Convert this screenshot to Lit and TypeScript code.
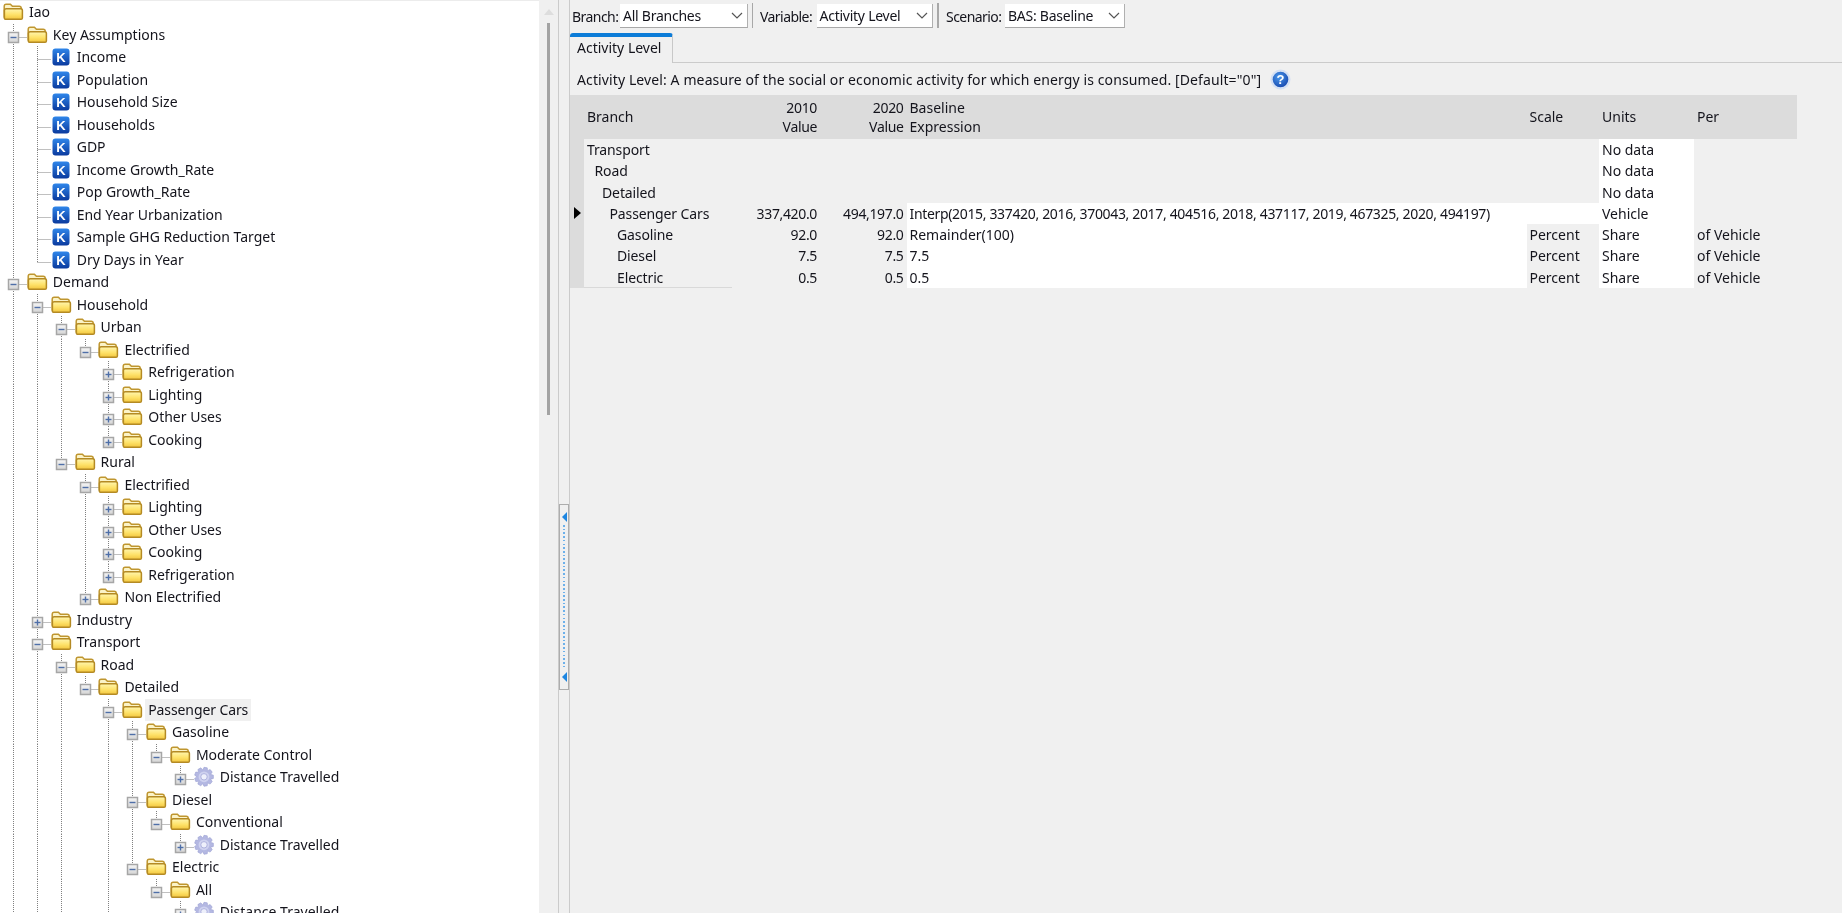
import { LitElement, html, css, svg } from "lit";
import { customElement } from "lit/decorators.js";

type Icon = "folder" | "key" | "gear";
interface Node { level: number; label: string; icon: Icon; plus?: boolean; active?: boolean; }

const f = (level: number, label: string, plus = false, active = false): Node => ({ level, label, icon: "folder", plus, active });
const k = (label: string): Node => ({ level: 2, label, icon: "key" });
const g = (level: number, label: string): Node => ({ level, label, icon: "gear", plus: true });

const TREE: Node[] = [
  f(0, "Iao"), f(1, "Key Assumptions"),
  k("Income"), k("Population"), k("Household Size"), k("Households"), k("GDP"),
  k("Income Growth_Rate"), k("Pop Growth_Rate"), k("End Year Urbanization"),
  k("Sample GHG Reduction Target"), k("Dry Days in Year"),
  f(1, "Demand"), f(2, "Household"), f(3, "Urban"), f(4, "Electrified"),
  f(5, "Refrigeration", true), f(5, "Lighting", true), f(5, "Other Uses", true), f(5, "Cooking", true),
  f(3, "Rural"), f(4, "Electrified"),
  f(5, "Lighting", true), f(5, "Other Uses", true), f(5, "Cooking", true), f(5, "Refrigeration", true),
  f(4, "Non Electrified", true), f(2, "Industry", true), f(2, "Transport"), f(3, "Road"), f(4, "Detailed"),
  f(5, "Passenger Cars", false, true),
  f(6, "Gasoline"), f(7, "Moderate Control"), g(8, "Distance Travelled"),
  f(6, "Diesel"), f(7, "Conventional"), g(8, "Distance Travelled"),
  f(6, "Electric"), f(7, "All"), g(8, "Distance Travelled"),
];
// Levels whose sibling list carries on below the visible part of the tree.
const CONTINUES = new Set([1, 2, 3, 5]);

function continues(i: number, lvl: number): boolean {
  for (let j = i + 1; j < TREE.length; j++) {
    if (TREE[j].level < lvl) return false;
    if (TREE[j].level === lvl) return true;
  }
  return CONTINUES.has(lvl);
}

const CX = 13.5, HY = 13.5, CW = 23.85, RH = 22.5;

function guideCell(i: number, k: number) {
  const n = TREE[i];
  const dash = "1 1";
  const cls = "cell";
  if (k < n.level) {
    return continues(i, k)
      ? svg`<svg class=${cls} width=${CW} height=${RH}><line x1=${CX} x2=${CX} y1="0" y2=${RH} stroke="#808080" stroke-dasharray=${dash}/></svg>`
      : svg`<svg class=${cls} width=${CW} height=${RH}></svg>`;
  }
  const more = continues(i, k);
  const expanded = i + 1 < TREE.length && TREE[i + 1].level > n.level;
  const hasBox = n.plus || expanded;
  return svg`<svg class=${cls} width=${CW} height=${RH}>
    <line x1=${CX} x2=${CX} y1="0" y2=${more ? RH : HY} stroke="#808080" stroke-dasharray=${dash}/>
    <line x1=${CX} x2="27" y1=${HY} y2=${HY} stroke="#808080" stroke-dasharray=${dash}/>
    ${hasBox
      ? svg`<rect x="8.5" y="8.5" width="10" height="10" fill="url(#box)" stroke="#a6a6a6" stroke-width="1.5"/>
            <line x1="10.5" x2="16.5" y1=${HY} y2=${HY} stroke="#4f6fa8" stroke-width="1.4"/>
            ${n.plus ? svg`<line x1=${CX} x2=${CX} y1="10.5" y2="16.5" stroke="#4f6fa8" stroke-width="1.4"/>` : ""}`
      : ""}
  </svg>`;
}

const folder = svg`<svg class="ico" width="20" height="17" viewBox="0 0 20 17">
  <path d="M1.2 14V3.4Q1.2 1.2 3.2 1.2H7.4L9.4 3.3H16.2Q18.2 3.3 18.2 5.3V15.4H2.6Q1.2 15.4 1.2 14Z" fill="#fbf3c8" stroke="#bf962f" stroke-width="1.5"/>
  <path d="M1.4 15V7.4Q1.4 5.7 3.2 5.7H17.6Q19.4 5.7 19.4 7.4V15Q19.4 16.3 18 16.3H2.8Q1.4 16.3 1.4 15Z" fill="url(#fold)" stroke="#b48a24" stroke-width="1.5"/>
</svg>`;

const keyIcon = svg`<svg class="ico" width="20" height="17" viewBox="0 0 20 17">
  <rect x="1.5" y="0.5" width="17" height="17" rx="3" fill="url(#key)"/>
  <text x="10" y="13.5" text-anchor="middle" class="k">K</text>
</svg>`;

const gearPath = (() => {
  const pts: string[] = [];
  const teeth = 9, cx = 10, cy = 8.8;
  for (let t = 0; t < teeth; t++) {
    const a = (t / teeth) * Math.PI * 2;
    const w = Math.PI / teeth;
    const p = (r: number, an: number) => `${(cx + r * Math.cos(an)).toFixed(2)} ${(cy + r * Math.sin(an)).toFixed(2)}`;
    pts.push(p(7.2, a - w * 0.95), p(9.5, a - w * 0.5), p(9.5, a + w * 0.5), p(7.2, a + w * 0.95));
  }
  return "M" + pts.join("L") + "Z";
})();

const gear = svg`<svg class="ico" width="20" height="18" viewBox="0 0 20 18">
  <path d=${gearPath} fill="#b4b8e2" stroke="#9a9fd2" stroke-width=".6"/>
  <circle cx="10" cy="8.8" r="5.4" fill="#cfd2ef"/>
  <circle cx="10" cy="8.8" r="3.2" fill="#eef0fb" stroke="#a2a6d8" stroke-width=".8"/>
</svg>`;

const ICONS = { folder, key: keyIcon, gear };

const chevron = html`<svg class="chev" width="12" height="7" viewBox="0 0 12 7"><path d="M1 1L6 6L11 1" fill="none" stroke="#555" stroke-width="1.2"/></svg>`;

interface Row { indent: number; name: string; v10?: string; v20?: string; expr?: string; scale?: string; units: string; per?: string; marker?: boolean; }
const ROWS: Row[] = [
  { indent: 0, name: "Transport", units: "No data" },
  { indent: 1, name: "Road", units: "No data" },
  { indent: 2, name: "Detailed", units: "No data" },
  { indent: 3, name: "Passenger Cars", v10: "337,420.0", v20: "494,197.0", expr: "Interp(2015, 337420, 2016, 370043, 2017, 404516, 2018, 437117, 2019, 467325, 2020, 494197)", units: "Vehicle", marker: true },
  { indent: 4, name: "Gasoline", v10: "92.0", v20: "92.0", expr: "Remainder(100)", scale: "Percent", units: "Share", per: "of Vehicle" },
  { indent: 4, name: "Diesel", v10: "7.5", v20: "7.5", expr: "7.5", scale: "Percent", units: "Share", per: "of Vehicle" },
  { indent: 4, name: "Electric", v10: "0.5", v20: "0.5", expr: "0.5", scale: "Percent", units: "Share", per: "of Vehicle" },
];

@customElement("app-root")
export class AppRoot extends LitElement {
  static styles = css`
    :host { display: block; width: 1842px; height: 913px; overflow: hidden; background: #f0f0f0;
      font: 14px "Noto Sans", "Open Sans", sans-serif; color: #14141c; filter: blur(0.3px); }
    .defs { display: block; }
    .app { display: flex; height: 913px; }
    .tree { width: 539px; height: 913px; overflow: hidden; background: #fff; border-top: 1px solid #ececec; box-sizing: border-box; padding-top: 0.3px; flex: none; }
    .node { display: flex; align-items: flex-start; height: 22.5px; white-space: nowrap; }
    .cell { display: block; flex: none; overflow: visible; }
    .ico { display: block; flex: none; margin: 2px 0 0 3px; overflow: visible; }
    .k { font: bold 13px "Liberation Sans", sans-serif; fill: #fff; }
    .label { margin-left: 3px; padding: 0 3px; line-height: 22px; height: 22px; }
    .label.active { background: #f0f0f0; letter-spacing: -0.1px; }
    .sb { width: 19px; flex: none; display: flex; flex-direction: column; align-items: center; box-sizing: border-box; padding-top: 9px; }
    .sb-up { width: 0; height: 0; border: 5px solid transparent; border-top: 0; border-bottom: 6px solid #dddddd; }
    .sb-thumb { width: 2.5px; height: 392px; margin-top: 8px; background: #a3a3a3; }
    .split { width: 12px; flex: none; box-sizing: border-box; border-left: 1.5px solid #cbcbcb; border-right: 1.5px solid #cbcbcb; padding-top: 504px; }
    .grip { height: 186px; box-sizing: border-box; border: 1.5px solid #adadad; display: flex; flex-direction: column; align-items: center; justify-content: space-between; padding: 7px 0; background: #f0f0f0; }
    .grip-tri { width: 0; height: 0; border: 5px solid transparent; border-left: 0; border-right: 5px solid #1e86e0; }
    .grip-dots { flex: 1; width: 2px; margin: 3px 0; background: repeating-linear-gradient(#6cb0ea 0 1.6px, transparent 1.6px 3.7px); }
    .right { flex: 1; min-width: 0; }
    .toolbar { height: 33px; display: flex; align-items: flex-start; padding-left: 2px; box-sizing: border-box; }
    .lab { line-height: 23px; margin-top: 5px; letter-spacing: -0.55px; flex: none; white-space: nowrap; }
    .l1 { width: 48px; }
    .l2 { width: 56.5px; }
    .l3 { width: 59px; }
    .select { margin-top: 4px; height: 24px; box-sizing: border-box; background: #fff; border-right: 1px solid #b0b0b0; border-bottom: 1.5px solid #a8a8a8; display: flex; align-items: center; justify-content: space-between; padding: 0 4px 0 3px; line-height: 21px; flex: none; letter-spacing: -0.25px; }
    .chev { display: block; flex: none; }
    .tsep { width: 1.5px; height: 25px; margin-top: 3px; background: #a8a8a8; flex: none; }
    .s1 { width: 127.5px; }
    .sep1 { margin: 3px 7px 0 4px; }
    .s2 { width: 116.5px; }
    .sep2 { margin: 3px 7.5px 0 4px; }
    .s3 { width: 120px; }
    .tabs { height: 30px; display: flex; }
    .tab { width: 103px; height: 30px; box-sizing: border-box; border-top: 4px solid #0c7cd8; border-right: 1.5px solid #c8c8c8; border-radius: 3px 3px 0 0; padding-left: 7px; line-height: 22px; }
    .tabline { flex: 1; border-bottom: 1.5px solid #cbcbcb; }
    .desc { height: 32px; display: flex; align-items: center; padding-left: 7px; white-space: nowrap; }
    .desc span { letter-spacing: 0.11px; }
    .help { display: block; margin-left: 9px; flex: none; }
    .help text { font: bold 13px "Liberation Sans", sans-serif; fill: #fff; }
    .grid { display: grid; grid-template-columns: 14px 148px 88px 86.5px 620px 72.5px 95px 102.5px; grid-template-rows: 44px; grid-auto-rows: 21.25px; white-space: nowrap; line-height: 21px; }
    .hd { background: #dcdcdc; display: flex; flex-direction: column; justify-content: center; line-height: 19.4px; box-sizing: border-box; }
    .num { text-align: right; padding-right: 3px; letter-spacing: -0.35px; }
    .pad { padding-left: 3px; }
    .rail { background: #dcdcdc; display: flex; align-items: center; justify-content: center; }
    .tri { width: 0; height: 0; border: 6.5px solid transparent; border-right: 0; border-left: 7.5px solid #000; }
    .white { background: #fff; }
    .bot { border-bottom: 1px solid #d9d9d9; box-sizing: border-box; }
    .tight { letter-spacing: -0.34px; }
    .bname { letter-spacing: -0.12px; }
  `;

  render() {
    return html`
      <svg class="defs" width="0" height="0">
        <defs>
          <linearGradient id="fold" x1="0" y1="0" x2="0" y2="1"><stop offset="0" stop-color="#fff6b0"/><stop offset=".55" stop-color="#fee26a"/><stop offset="1" stop-color="#f2c63e"/></linearGradient>
          <linearGradient id="key" x1="0" y1="0" x2="0" y2="1"><stop offset="0" stop-color="#2f86ea"/><stop offset="1" stop-color="#0a3a9e"/></linearGradient>
          <linearGradient id="box" x1="0" y1="0" x2="0" y2="1"><stop offset="0" stop-color="#f6f6f6"/><stop offset="1" stop-color="#d4d4d4"/></linearGradient>
          <radialGradient id="help" cx=".4" cy=".35" r=".8"><stop offset="0" stop-color="#4a98ec"/><stop offset="1" stop-color="#0f3ea6"/></radialGradient>
        </defs>
      </svg>
      <div class="app">
        <div class="tree">
          ${TREE.map((n, i) => html`
            <div class="node">
              ${Array.from({ length: n.level }, (_, d) => guideCell(i, d + 1))}
              ${ICONS[n.icon]}
              <span class="label ${n.active ? "active" : ""}">${n.label}</span>
            </div>`)}
        </div>
        <div class="sb"><div class="sb-up"></div><div class="sb-thumb"></div></div>
        <div class="split">
          <div class="grip"><div class="grip-tri"></div><div class="grip-dots"></div><div class="grip-tri"></div></div>
        </div>
        <div class="right">
          <div class="toolbar">
            <span class="lab l1">Branch:</span>
            <div class="select s1"><span>All Branches</span>${chevron}</div>
            <div class="tsep sep1"></div>
            <span class="lab l2">Variable:</span>
            <div class="select s2"><span>Activity Level</span>${chevron}</div>
            <div class="tsep sep2"></div>
            <span class="lab l3">Scenario:</span>
            <div class="select s3"><span>BAS: Baseline</span>${chevron}</div>
          </div>
          <div class="tabs"><div class="tab">Activity Level</div><div class="tabline"></div></div>
          <div class="desc">
            <span>Activity Level: A measure of the social or economic activity for which energy is consumed. [Default="0"]</span>
            <svg class="help" width="21" height="21" viewBox="0 0 21 21">
              <circle cx="10.5" cy="10.5" r="10" fill="#d3e0f4"/>
              <circle cx="10.5" cy="10.5" r="7.8" fill="url(#help)"/>
              <text x="10.5" y="15" text-anchor="middle">?</text>
            </svg>
          </div>
          <div class="grid">
            <div class="hd"></div>
            <div class="hd pad"><div>Branch</div></div>
            <div class="hd num"><div>2010</div><div>Value</div></div>
            <div class="hd num"><div>2020</div><div>Value</div></div>
            <div class="hd pad"><div>Baseline</div><div>Expression</div></div>
            <div class="hd pad"><div>Scale</div></div>
            <div class="hd pad"><div>Units</div></div>
            <div class="hd pad"><div>Per</div></div>
            ${ROWS.map((r, i) => {
              const last = i === ROWS.length - 1;
              return html`
                <div class="rail">${r.marker ? html`<div class="tri"></div>` : ""}</div>
                <div class="bname ${last ? "bot" : ""}" style="padding-left:${3 + r.indent * 7.5}px">${r.name}</div>
                <div class="num">${r.v10 ?? ""}</div>
                <div class="num">${r.v20 ?? ""}</div>
                <div class="pad ${r.expr ? "white" : ""} ${r.marker ? "tight" : ""}">${r.expr ?? ""}</div>
                <div class="pad ${r.marker ? "white" : ""}">${r.scale ?? ""}</div>
                <div class="pad white">${r.units}</div>
                <div class="pad">${r.per ?? ""}</div>`;
            })}
          </div>
        </div>
      </div>
    `;
  }
}
